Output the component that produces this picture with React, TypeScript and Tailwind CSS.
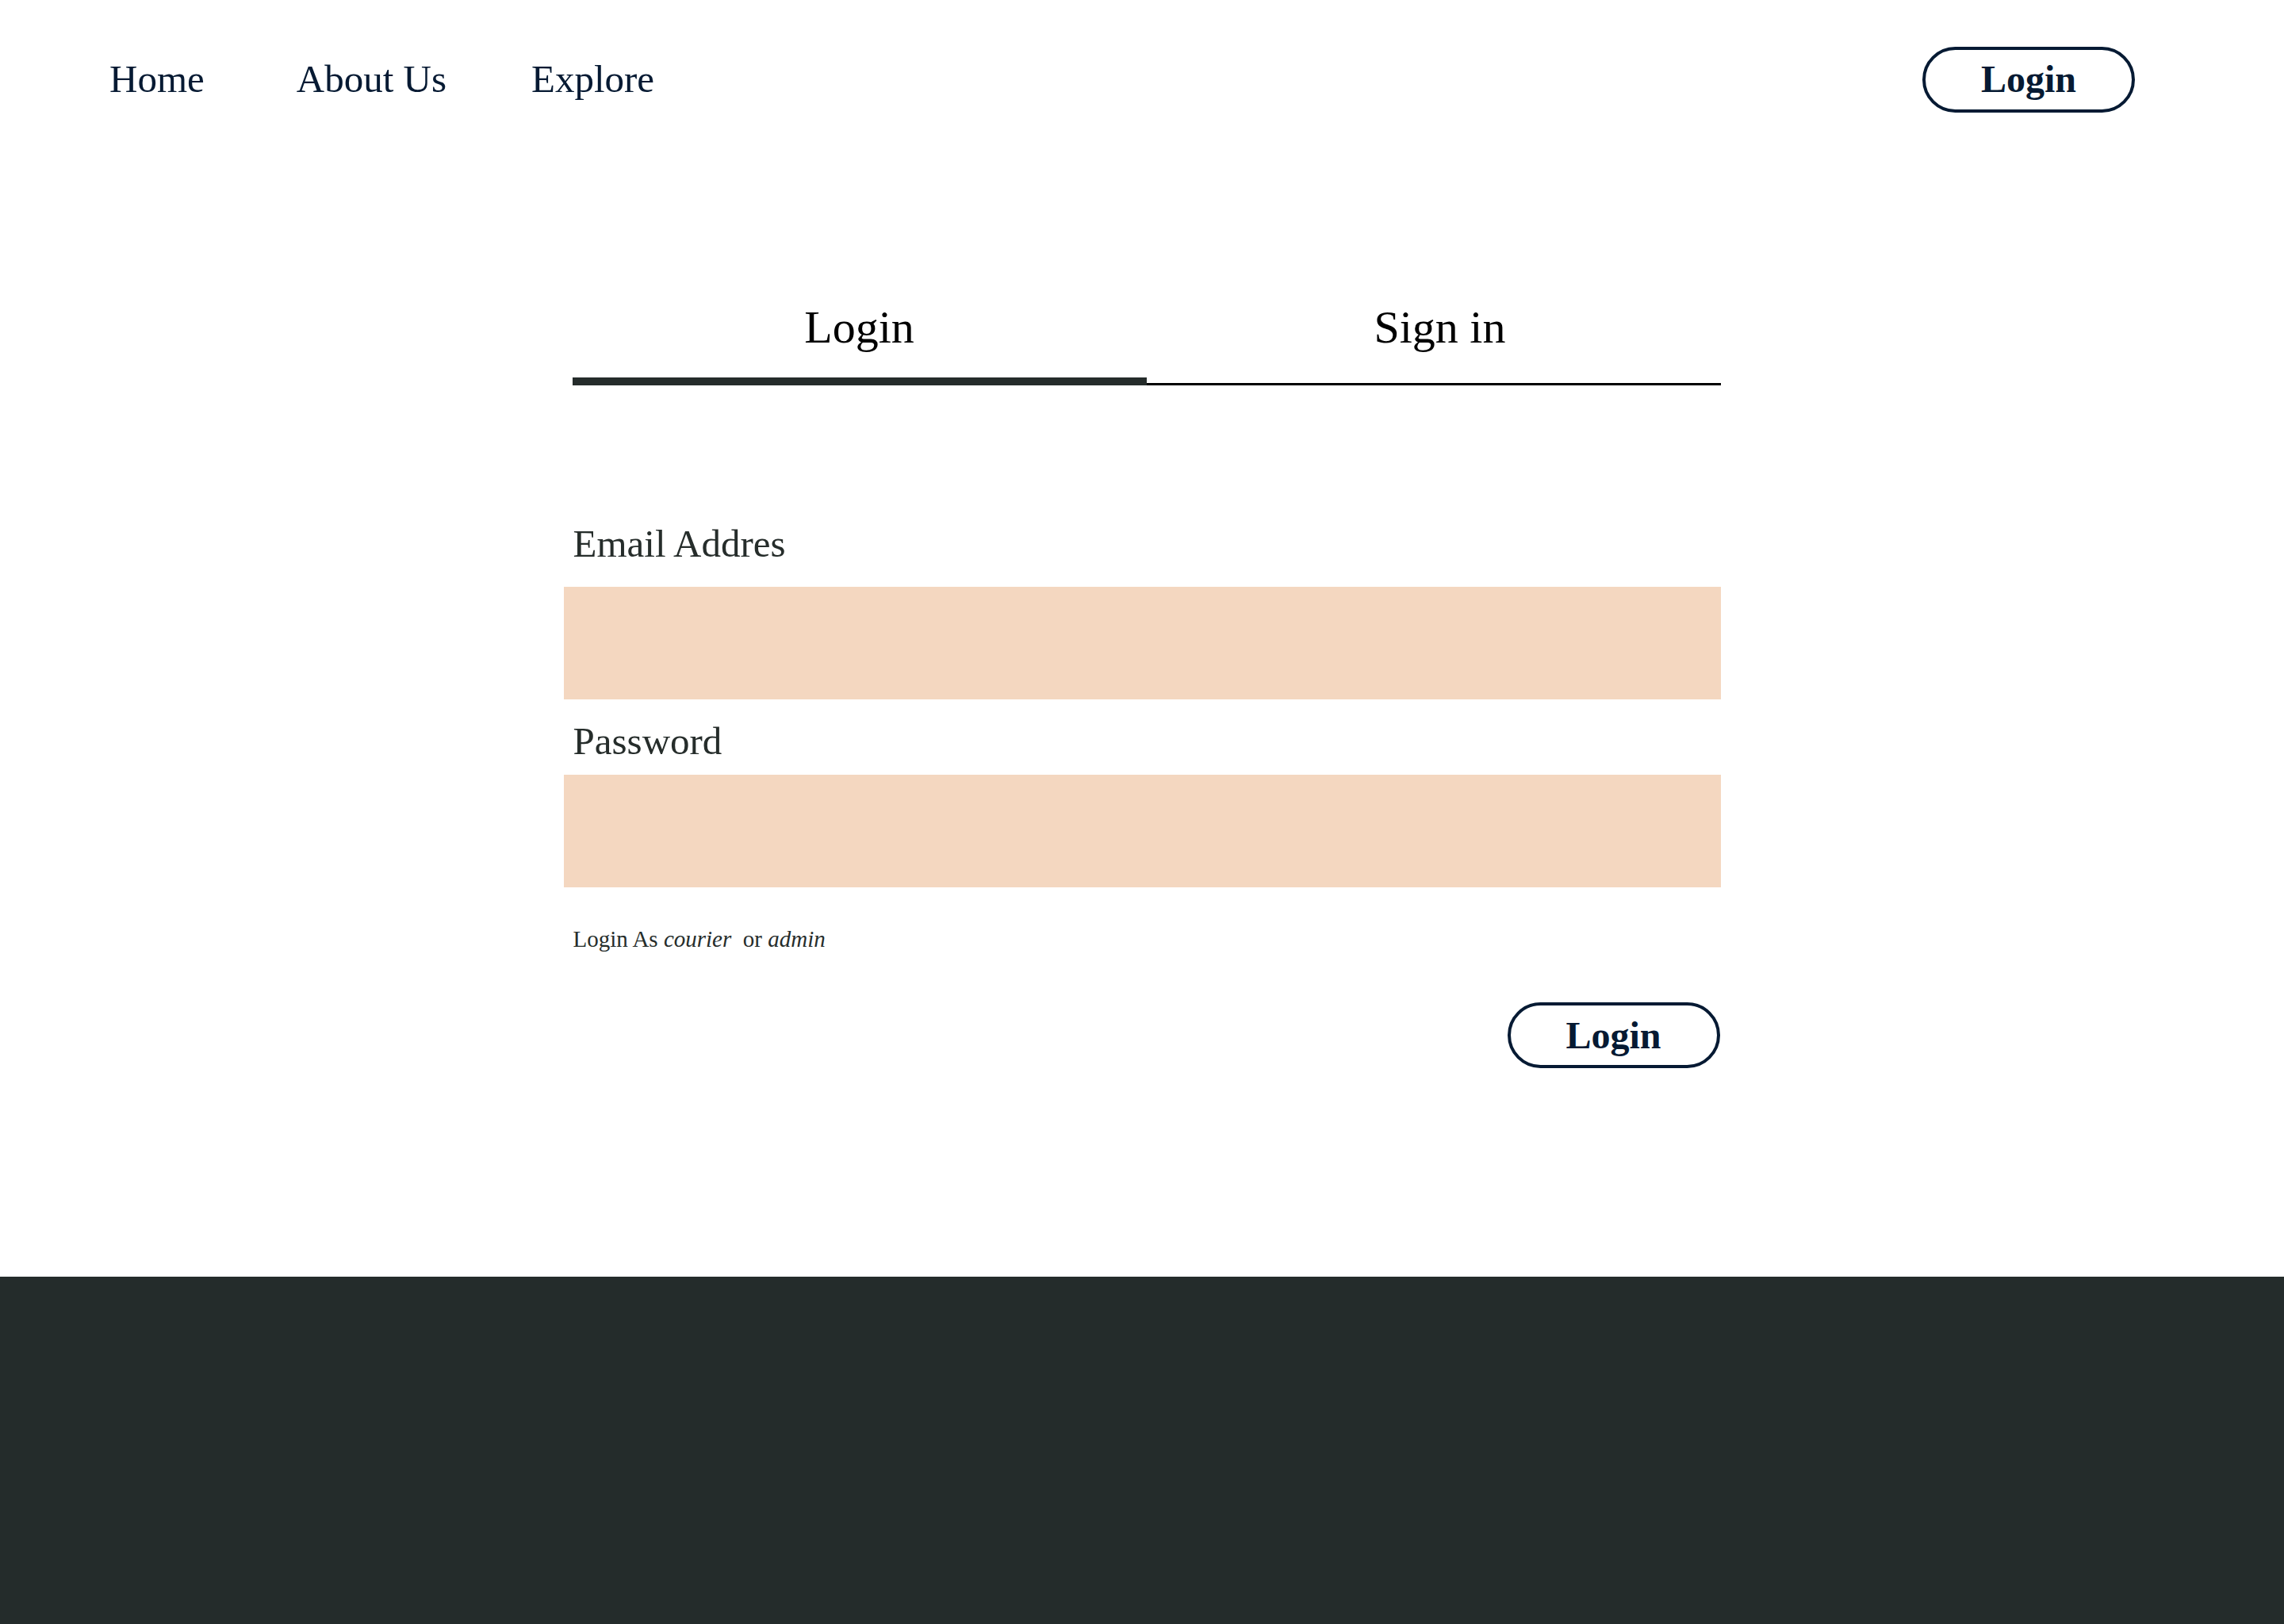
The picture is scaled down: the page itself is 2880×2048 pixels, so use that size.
import { useState } from "react";

const serif = "font-['Liberation_Serif','Times_New_Roman',serif]";

function PillButton({ label }: { label: string }) {
  return (
    <button
      className={`${serif} w-[268px] h-[83px] rounded-full border-[4px] border-[#061a33] bg-white text-[48px] font-bold leading-none text-[#061a33]`}
    >
      {label}
    </button>
  );
}

export default function App() {
  const [tab, setTab] = useState<"login" | "signin">("login");
  const [email, setEmail] = useState("");
  const [password, setPassword] = useState("");

  return (
    <div className={`${serif} min-h-screen bg-white flex flex-col`}>
      <header className="h-[200px] flex items-center justify-between pl-[138px] pr-[188px]">
        <nav className="flex items-center text-[49px] text-[#061a33]">
          <a href="#">Home</a>
          <a href="#" className="ml-[116px]">About Us</a>
          <a href="#" className="ml-[107px]">Explore</a>
        </nav>
        <PillButton label="Login" />
      </header>

      <main className="w-[1459px] mx-auto">
        <div className="ml-[11px] mt-[180px] grid grid-cols-2 border-b-[3px] border-black">
          <button
            onClick={() => setTab("login")}
            className="relative pb-[38px] text-center text-[58px] leading-[65px] text-black"
          >
            Login
            {tab === "login" && (
              <span className="absolute left-0 right-0 bottom-[-3px] h-[10px] bg-[#252c2b]" />
            )}
          </button>
          <button
            onClick={() => setTab("signin")}
            className="relative pb-[38px] pl-[16px] text-center text-[58px] leading-[65px] text-black"
          >
            Sign in
            {tab === "signin" && (
              <span className="absolute left-0 right-0 bottom-[-3px] h-[10px] bg-[#252c2b]" />
            )}
          </button>
        </div>

        <form onSubmit={(e) => e.preventDefault()} className="flex flex-col">
          <label className="mt-[172px] pl-[12px] text-[49px] leading-[55px] text-[#262d2b]">
            Email Addres
          </label>
          <input
            value={email}
            onChange={(e) => setEmail(e.target.value)}
            className="mt-[27px] h-[142px] w-full bg-[#f4d7c0] px-[12px] text-[40px] outline-none"
          />
          <label className="mt-[25px] pl-[12px] text-[49px] leading-[55px] text-[#262d2b]">
            Password
          </label>
          <input
            type="password"
            value={password}
            onChange={(e) => setPassword(e.target.value)}
            className="mt-[15px] h-[142px] w-full bg-[#f4d7c0] px-[12px] text-[40px] outline-none"
          />
          <p className="mt-[49px] pl-[12px] text-[29px] leading-[32px] text-[#262d2b]">
            Login As <i>courier</i>&nbsp; or <i>admin</i>
          </p>
          <div className="mt-[64px] flex justify-end pr-[1px]">
            <PillButton label="Login" />
          </div>
        </form>
      </main>

      <footer className="mt-[263px] h-[438px] bg-[#242c2b]" />
    </div>
  );
}
